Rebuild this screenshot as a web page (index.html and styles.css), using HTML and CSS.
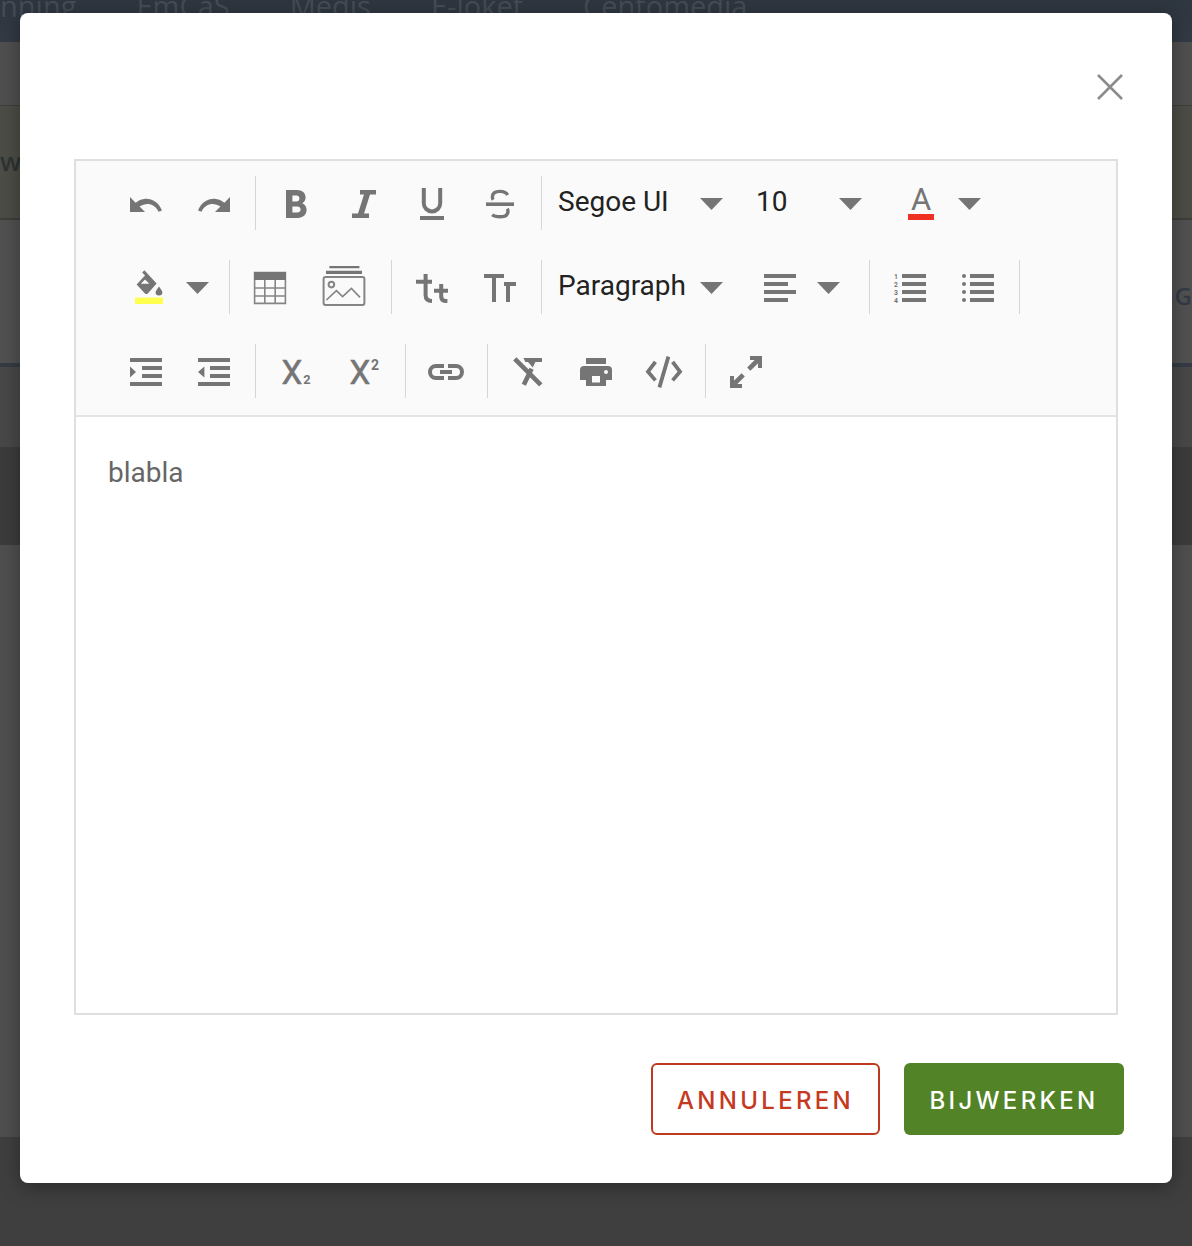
FILE: index.html
```html
<!DOCTYPE html>
<html lang="nl">
<head>
<meta charset="utf-8">
<title>Editor</title>
<link rel="stylesheet" href="styles.css">
</head>
<body>
<div class="page">
  <nav class="nav"><span>nning</span><span>EmCaS</span><span>Medis</span><span>E-loket</span><span>Centomedia</span></nav>
  <div class="band band-a"></div>
  <div class="band band-olive"><span>w</span></div>
  <div class="band band-b"><span>G</span></div>
  <div class="band band-c"></div>
  <div class="band band-d"></div>
  <div class="band band-e"></div>
  <div class="band band-f"></div>
</div>
<div class="modal">
  <div class="modal-head">
    <svg class="close" viewBox="0 0 26 26"><path d="M1 1l24 24M25 1L1 25"/></svg>
  </div>
  <div class="editor">
    <div class="toolbar">
      <div class="row">
        <button class="btn"><svg viewBox="0 0 24 24"><path d="M11 9.500c-1.700.2-3 .9-4.200 1.900L4 8.500V16h7.500l-2.700-2.700c3.200-2.200 7.600-1.600 9.400 2.600L20 15.200C18.200 11 14.700 9 11 9.500z"/></svg></button>
        <button class="btn"><svg viewBox="0 0 24 24"><path transform="translate(24 0) scale(-1 1)" d="M11 9.500c-1.700.2-3 .9-4.200 1.900L4 8.500V16h7.500l-2.700-2.700c3.200-2.200 7.600-1.600 9.400 2.600L20 15.200C18.200 11 14.700 9 11 9.500z"/></svg></button>
        <i class="sep"></i>
        <button class="btn"><svg viewBox="0 0 24 24"><path fill-rule="evenodd" d="M7 5h5.500c2.600 0 4.300 1.500 4.300 3.700 0 1.300-.7 2.300-1.700 2.900 1.300.5 2.200 1.800 2.200 3.300 0 2.400-1.800 4.100-4.500 4.100H7zm3.200 2.800v2.900h2c1 0 1.500-.6 1.500-1.500s-.6-1.400-1.500-1.400zm0 5.400v3h2.400c1 0 1.700-.6 1.700-1.500s-.7-1.500-1.700-1.500z"/></svg></button>
        <button class="btn"><svg viewBox="0 0 24 24"><path d="M10 5h8v2.200h-3L12 16.800h2.500V19H6v-2.200h3L12 7.200h-2z"/></svg></button>
        <button class="btn"><svg viewBox="0 0 24 24"><path class="ln" d="M7.900 4v7.600a4.100 4.100 0 0 0 8.200 0V4"/><path d="M6 18h12v2H6z"/></svg></button>
        <button class="btn"><svg viewBox="0 0 24 24"><path d="M5 11.200h14V13H5z"/><path class="ln thin" d="M15.800 7.500C15.200 6.300 14 5.700 12 5.700c-2.400 0-3.800 1-3.800 2.800 0 .6.1 1 .4 1.400M15.600 14.400c.2.3.4.7.4 1.200 0 1.800-1.500 2.800-3.900 2.800-2 0-3.400-.5-4-1"/></svg></button>
        <i class="sep"></i>
        <button class="dd dd-font"><span>Segoe UI</span><b class="caret"></b></button>
        <button class="dd dd-size"><span>10</span><b class="caret"></b></button>
        <button class="combo"><svg viewBox="0 0 24 24"><text class="glyph" x="12" y="15" text-anchor="middle">A</text><rect class="red" x="5.500" y="17" width="13" height="3"/></svg><b class="caret"></b></button>
      </div>
      <div class="row">
        <button class="combo"><svg viewBox="0 0 24 24"><path fill-rule="evenodd" d="M5.800 10.200L10 5.800 8.600 4.200l1.100-1.100 6.100 6.700-4.400 4.900a1 1 0 0 1-1.400 0zM10 7.700L7.900 9.900h4.300z"/><path d="M17 11.300c1 1.400 1.700 2.200 1.700 2.900a1.700 1.500 0 0 1-3.400 0c0-.7.700-1.500 1.700-2.900z"/><rect class="yellow" x="5" y="16.800" width="14" height="3.200"/></svg><b class="caret"></b></button>
        <i class="sep"></i>
        <button class="btn"><svg viewBox="0 0 24 24"><path class="soft" d="M4.300 4.300h15.400v15.400H4.300zM9.400 8v11.700M14.600 8v11.700M4.300 12h15.400M4.300 16h15.400"/><path d="M4 4h16v4H4z"/></svg></button>
        <button class="btn btn-wide"><svg viewBox="0 0 24 24"><path d="M4.700 1h15v1.100h-15zM3 3.400h18V5H3z"/><rect class="frame" x="1.800" y="6.500" width="20.400" height="14" rx="1"/><circle class="frame" cx="5.700" cy="10.300" r="1.400"/><path class="soft" d="M3.200 18l5-4.700 3.100 3 4.400-4.100 4.300 4.500"/></svg></button>
        <i class="sep"></i>
        <button class="btn"><svg viewBox="0 0 24 24"><path class="ln" d="M8.800 5v10.500c0 2 1 3 3.200 3M4 8.900h8M16.600 10v6.300c0 1.400.7 2.200 2.100 2.200h1M13 13.400h7"/></svg></button>
        <button class="btn"><svg viewBox="0 0 24 24"><path d="M4 5h10v2h-4v12H8V7H4zM14 9h6v2h-3v8h-2v-8h-1z"/></svg></button>
        <i class="sep"></i>
        <button class="dd dd-font"><span>Paragraph</span><b class="caret"></b></button>
        <button class="combo combo-align"><svg viewBox="0 0 24 24"><path d="M4 5h16v2H4zM4 9h12v2H4zM4 13h16v2H4zM4 17h12v2H4z"/></svg><b class="caret"></b></button>
        <i class="sep"></i>
        <button class="btn"><svg viewBox="0 0 24 24"><path d="M8 5h12v2H8zM8 9h12v2H8zM8 13h12v2H8zM8 17h12v2H8z"/><text class="num" x="5" y="7.300" text-anchor="middle">1</text><text class="num" x="5" y="11.300" text-anchor="middle">2</text><text class="num" x="5" y="15.300" text-anchor="middle">3</text><text class="num" x="5" y="19.300" text-anchor="middle">4</text></svg></button>
        <button class="btn"><svg viewBox="0 0 24 24"><path d="M8 5h12v2H8zM8 9h12v2H8zM8 13h12v2H8zM8 17h12v2H8z"/><circle cx="5" cy="6" r="1"/><circle cx="5" cy="10" r="1"/><circle cx="5" cy="14" r="1"/><circle cx="5" cy="18" r="1"/></svg></button>
        <i class="sep"></i>
      </div>
      <div class="row">
        <button class="btn"><svg viewBox="0 0 24 24"><path d="M4 5h16v2H4zM10 9h10v2H10zM10 13h10v2H10zM4 17h16v2H4zM4 9.300L7 12l-3 2.700z"/></svg></button>
        <button class="btn"><svg viewBox="0 0 24 24"><path d="M4 5h16v2H4zM10 9h10v2H10zM10 13h10v2H10zM4 17h16v2H4zM7.200 9.300L4 12l3.200 2.700z"/></svg></button>
        <i class="sep"></i>
        <button class="btn"><svg viewBox="0 0 24 24"><text class="glyph glyph-x" x="10" y="18" text-anchor="middle">X</text><text class="small" x="17.500" y="18" text-anchor="middle">2</text></svg></button>
        <button class="btn"><svg viewBox="0 0 24 24"><text class="glyph glyph-x" x="10" y="18" text-anchor="middle">X</text><text class="small small-up" x="17.500" y="11" text-anchor="middle">2</text></svg></button>
        <i class="sep"></i>
        <button class="btn"><svg viewBox="0 0 24 24"><path class="ln" d="M11 9H7a3 3 0 0 0 0 6h4M13 9h4a3 3 0 0 1 0 6h-4M9 12h6"/></svg></button>
        <i class="sep"></i>
        <button class="btn"><svg viewBox="0 0 24 24"><path d="M9.700 5H19v2h-3.300l-1.300 2.700L12 7h-1.300z"/><path class="ln wide" d="M5.400 5.400l13 13M13.800 10.400l-3.900 8"/></svg></button>
        <button class="btn"><svg viewBox="0 0 24 24"><path fill-rule="evenodd" d="M7 5h10v3H7zM6 9h12a2 2 0 0 1 2 2v5h-3v3H7v-3H4v-5a2 2 0 0 1 2-2zm4 5v3.200h4V14zm7-3a1 1 0 1 0 0 2 1 1 0 0 0 0-2z"/></svg></button>
        <button class="btn"><svg viewBox="0 0 24 24"><path class="ln open" d="M7.700 6.900L4 11.800 7.700 16.200M16.300 6.900L20 11.800l-3.700 4.400M14.200 4.300L9.700 19.700"/></svg></button>
        <i class="sep"></i>
        <button class="btn"><svg viewBox="0 0 24 24"><path d="M14 4h6v6h-2V7.400L16.600 6H14zM10 20H4v-6h2v2.600L7.400 18H10z"/><path class="ln wide" d="M13.400 10.600l4.100-4.100M6.500 17.500l4.100-4.100"/></svg></button>
      </div>
    </div>
    <div class="content"><p>blabla</p></div>
  </div>
  <div class="footer">
    <button class="action action-cancel">ANNULEREN</button>
    <button class="action action-save">BIJWERKEN</button>
  </div>
</div>
</body>
</html>
```
FILE: styles.css
```css
* { box-sizing: border-box; }
html, body { margin: 0; padding: 0; }
body { width: 1192px; height: 1246px; overflow: hidden; background: #3f3f3f; font-family: Roboto, "Liberation Sans", sans-serif; }

.page { height: 1246px; display: flex; flex-direction: column; }
.nav { height: 42px; flex: none; display: flex; gap: 60px; align-items: flex-start; overflow: hidden; background: linear-gradient(#2e3640, #323a44); color: #454c55; font: 29px/28px "Open Sans", sans-serif; white-space: nowrap; }
.nav span { margin-top: -8px; }
.band { flex: none; overflow: hidden; }
.band-a { height: 64px; background: #4f4f4f; border-bottom: 1px solid #3d3f38; }
.band-olive { height: 114px; background: #4c4d46; border-bottom: 2px solid #3d3f38; padding-top: 40px; color: #2e3334; font: 600 26px/30px "Open Sans", sans-serif; }
.band-b { height: 147px; background: #515151; display: flex; justify-content: flex-end; padding-top: 60px; color: #343b46; font: 600 24px/32px "Open Sans", sans-serif; border-bottom: 4px solid #343b44; }
.band-c { height: 80px; background: #484848; }
.band-d { height: 98px; background: #3c3c3c; }
.band-e { height: 592px; background: #4f4f4f; }
.band-f { flex: 1; background: #3f3f3f; }

.modal { position: absolute; left: 20px; top: 13px; width: 1152px; height: 1170px; padding: 0 48px; background: #fff; border-radius: 8px; box-shadow: 0 4px 20px rgba(0, 0, 0, .35); }
.modal-head { height: 146px; padding: 61px 1px 0 0; display: flex; justify-content: flex-end; }
.close { width: 26px; height: 26px; fill: none; stroke: #8c8c8c; stroke-width: 2.600; }

.editor { margin: 0 6px; height: 856px; border: 2px solid #dfdfdf; display: flex; flex-direction: column; }
.toolbar { box-sizing: content-box; height: 253px; flex: none; padding: 1px 0 0 36px; background: #fafafa; border-bottom: 2px solid #e4e4e4; }
.row { height: 84px; display: flex; align-items: center; }

button { appearance: none; border: 0; padding: 0; margin: 0; background: none; font: inherit; }
svg { flex: none; display: block; }
.toolbar svg { width: 48px; height: 48px; fill: #757575; }
.btn { width: 68px; height: 84px; flex: none; display: flex; align-items: center; justify-content: center; }
.btn-wide { width: 80px; }
.sep { width: 1px; height: 54px; margin: -2px 6px 0 7px; flex: none; background: #d6d6d6; }

.caret { display: block; width: 23px; height: 12px; flex: none; background: #757575; clip-path: polygon(0 0, 100% 0, 50% 100%); }
.dd { height: 84px; flex: none; display: flex; align-items: center; justify-content: space-between; padding: 0 20px 0 10px; font: 28px/34px Roboto, sans-serif; color: #222; }
.dd span { margin-top: -4px; }
.dd-font { width: 195px; }
.dd-size { width: 138px; margin-left: 3px; padding-right: 22px; }
.combo { height: 84px; flex: none; display: flex; align-items: center; gap: 13px; padding: 0 13px; }
.combo-align { padding-right: 22px; }

.ln { fill: none; stroke: #757575; stroke-width: 2; }
.thin { stroke-width: 1.700; }
.wide { stroke-width: 2.300; }
.open { stroke-width: 1.900; }
.soft { fill: none; stroke: #858585; stroke-width: .8; }
.frame { fill: none; stroke: #858585; stroke-width: 1; }
.red { fill: #ef3124; }
.yellow { fill: #ffff4d; }
.glyph { font: 15.500px Roboto, sans-serif; fill: #757575; }
.glyph-x { font-size: 16.600px; stroke: #757575; stroke-width: .25; }
.small { font: bold 6.400px Roboto, sans-serif; fill: #757575; }
.small-up { font-size: 7px; }
.num { font: bold 3.400px Roboto, sans-serif; fill: #757575; }

.content { flex: 1; background: #fff; padding: 36px 32px; color: #666; font: 28px/40px Roboto, sans-serif; }
.content p { margin: 0; }

.footer { margin-top: 48px; display: flex; justify-content: flex-end; gap: 24px; }
.action { height: 72px; padding-top: 4px; border-radius: 6px; font: 500 24px/1 Inter, sans-serif; letter-spacing: 3.300px; }
.action-cancel { width: 229px; border: 2px solid #bd3a1f; color: #c5391f; background: #fff; }
.action-save { width: 220px; background: #528326; color: #fff; }
```
